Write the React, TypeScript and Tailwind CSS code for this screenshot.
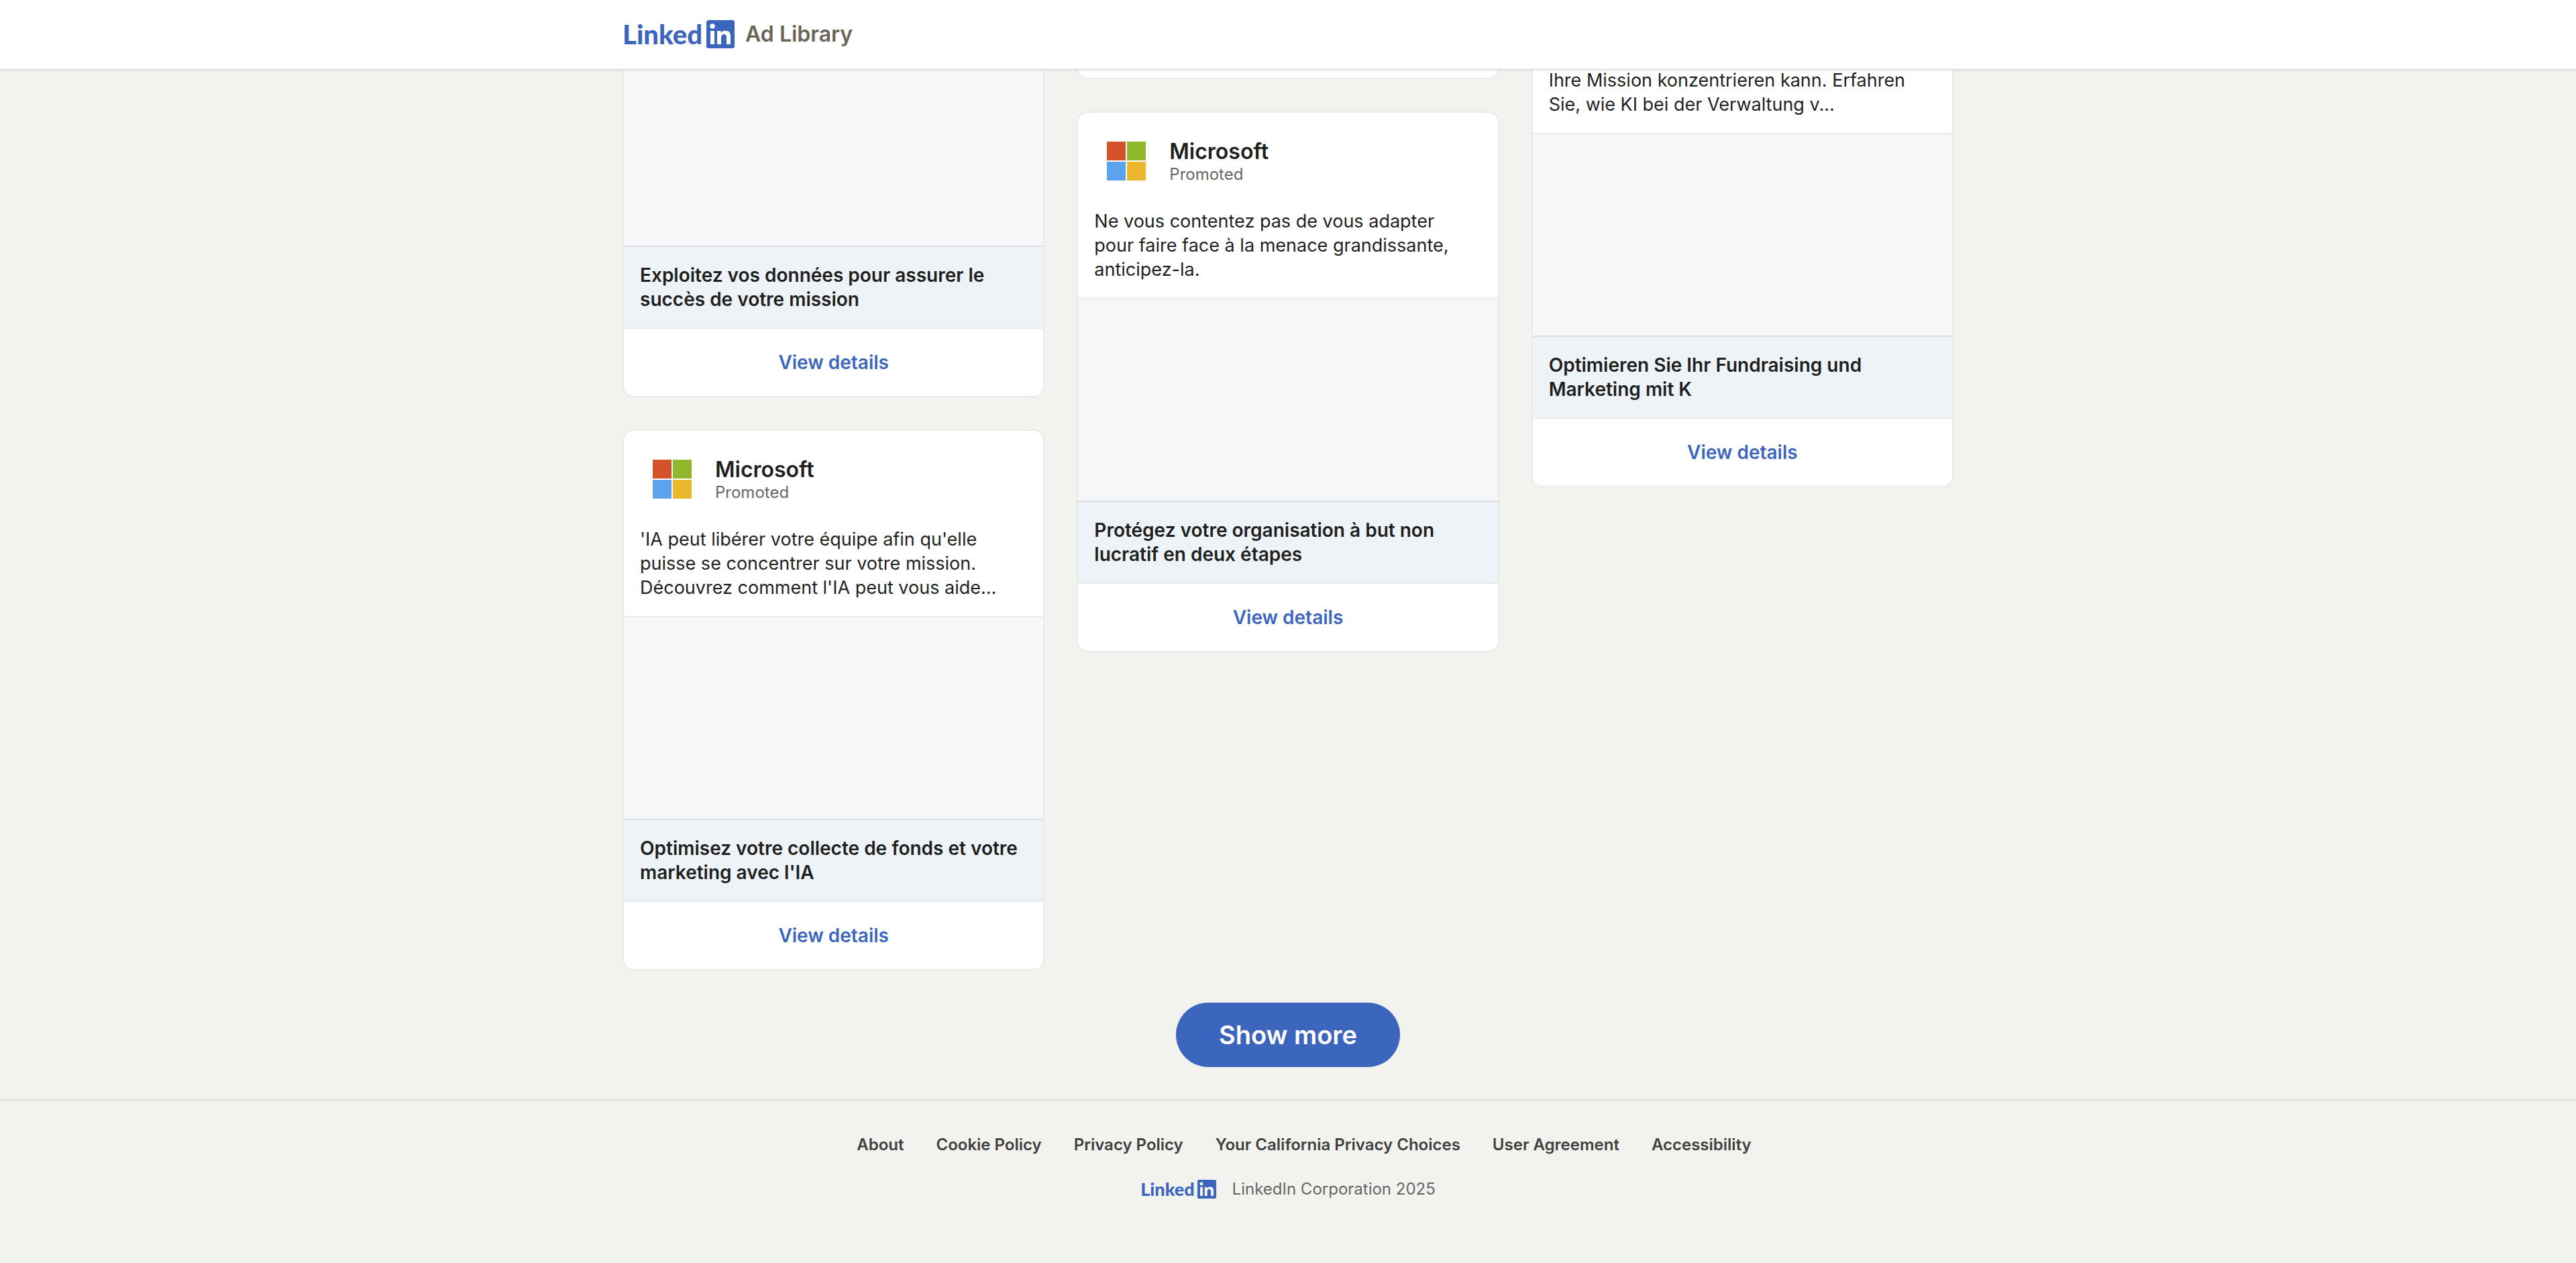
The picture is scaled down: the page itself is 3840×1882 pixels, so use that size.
type Ad = { body: string; headline: string };

const LINKS = [
  "About",
  "Cookie Policy",
  "Privacy Policy",
  "Your California Privacy Choices",
  "User Agreement",
  "Accessibility",
];

function InBug({ className }: { className: string }) {
  return (
    <svg viewBox="0 0 21 21" className={className} fill="currentColor" aria-hidden="true">
      <path
        fillRule="evenodd"
        d="M19.479 0H1.583C.727 0 0 .677 0 1.511v17.977C0 20.323.477 21 1.333 21h17.896C20.086 21 21 20.323 21 19.488V1.511C21 .677 20.336 0 19.479 0ZM8 8h2.827v1.441h.031c.431-.777 1.704-1.566 3.278-1.566C17.157 7.875 18 9.479 18 12.45V18h-3v-5.003c0-1.33-.531-2.497-1.773-2.497C11.719 10.5 11 11.521 11 13.197V18H8V8ZM3 18h3V8H3v10ZM6.375 4.5a1.875 1.875 0 1 1-3.75 0 1.875 1.875 0 0 1 3.75 0Z"
      />
    </svg>
  );
}

function MicrosoftLogo() {
  return (
    <svg viewBox="0 0 96 96" className="size-24 shrink-0" aria-hidden="true">
      <path fill="#d35229" d="M19 19h28v28H19z" />
      <path fill="#90b82b" d="M49 19h28v28H49z" />
      <path fill="#5ba3ec" d="M19 49h28v28H19z" />
      <path fill="#ebb72d" d="M49 49h28v28H49z" />
    </svg>
  );
}

function CardHeader() {
  return (
    <div className="flex items-center gap-4 px-6 pt-6">
      <MicrosoftLogo />
      <div>
        <h2 className="text-[32px] leading-10 font-semibold">Microsoft</h2>
        <p className="text-2xl leading-7 text-[#666666]">Promoted</p>
      </div>
    </div>
  );
}

function CardFooter({ headline }: { headline: string }) {
  return (
    <>
      <h3 className="border-t-2 border-[#d9dde3] bg-[#eef3f7] p-6 font-semibold">{headline}</h3>
      <a
        href="#details"
        className="flex h-[102px] items-center justify-center border-t-2 border-[#e9e9e9] font-semibold text-[#3c65be]"
      >
        View details
      </a>
    </>
  );
}

function AdCard({ body, headline }: Ad) {
  return (
    <article className="overflow-hidden rounded-2xl border-2 border-[#e9e9e9] bg-white">
      <CardHeader />
      <p className="py-6 pr-10 pl-6 text-[27px]">{body}</p>
      <div className="h-[302px] border-t-2 border-[#e9e9e9] bg-[#f6f7f9]" />
      <CardFooter headline={headline} />
    </article>
  );
}

const SCROLLED_CARD =
  "overflow-hidden rounded-b-2xl border-x-2 border-b-2 border-[#e9e9e9] bg-white";

export default function App() {
  return (
    <div className="flex min-h-screen flex-col bg-[#f2f3ee] font-['Inter',sans-serif] text-[28px] leading-9 text-[#1f1f1f]">
      <header className="sticky top-0 z-10 border-b-2 border-[#e9e9e9] bg-white shadow-[0_1px_2px_rgba(0,0,0,0.15)]">
        <a href="#home" className="mx-auto flex h-[102px] max-w-[1984px] items-center">
          <span className="flex items-center gap-1.5 text-[#3c65be]">
            <span className="font-['Lato',sans-serif] text-[40px] leading-10 font-black">Linked</span>
            <InBug className="size-[42px]" />
          </span>
          <span className="ml-4 text-[32px] leading-10 font-semibold text-[#6b6558]">Ad Library</span>
        </a>
      </header>

      <main className="-mt-0.5">
        <div className="mx-auto grid max-w-[1984px] grid-cols-3 items-start gap-12">
          <div className="flex flex-col gap-12">
            <article className={SCROLLED_CARD}>
              <div className="h-[264px] bg-[#f6f7f9]" />
              <CardFooter headline="Exploitez vos données pour assurer le succès de votre mission" />
            </article>
            <AdCard
              body="'IA peut libérer votre équipe afin qu'elle puisse se concentrer sur votre mission. Découvrez comment l'IA peut vous aide..."
              headline="Optimisez votre collecte de fonds et votre marketing avec l'IA"
            />
          </div>
          <div className="flex flex-col gap-12">
            <article className={SCROLLED_CARD}>
              <div className="h-3.5" />
            </article>
            <AdCard
              body="Ne vous contentez pas de vous adapter pour faire face à la menace grandissante, anticipez-la."
              headline="Protégez votre organisation à but non lucratif en deux étapes"
            />
          </div>
          <article className={SCROLLED_CARD}>
            <p className="pr-10 pb-6 pl-6 text-[27px]">
              Ihre Mission konzentrieren kann. Erfahren Sie, wie KI bei der Verwaltung v...
            </p>
            <div className="h-[302px] border-t-2 border-[#e9e9e9] bg-[#f6f7f9]" />
            <CardFooter headline="Optimieren Sie Ihr Fundraising und Marketing mit K" />
          </article>
        </div>
        <div className="flex justify-center py-12">
          <button
            type="button"
            className="h-24 rounded-full bg-[#3c65be] px-16 text-[38px] leading-12 font-semibold text-white"
          >
            Show more
          </button>
        </div>
      </main>

      <footer className="border-t-2 border-[#dddddd] pt-12 text-2xl leading-9">
        <ul className="flex flex-wrap justify-center font-semibold text-[#404040]">
          {LINKS.map((label) => (
            <li key={label} className="ml-12">
              <a href="#footer">{label}</a>
            </li>
          ))}
        </ul>
        <div className="mt-[30px] flex items-center justify-center gap-6">
          <span className="flex items-center gap-1 text-[#3c65be]">
            <span className="font-['Lato',sans-serif] text-[27px] leading-7 font-black">Linked</span>
            <InBug className="size-7" />
          </span>
          <p className="text-[#666666]">LinkedIn Corporation 2025</p>
        </div>
      </footer>
    </div>
  );
}
